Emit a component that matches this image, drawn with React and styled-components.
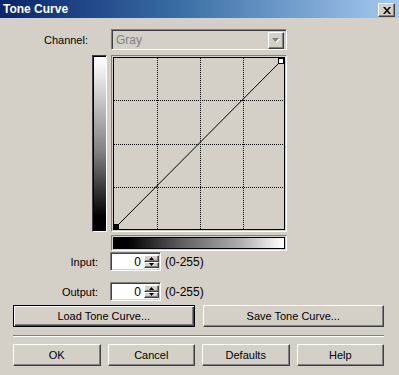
import React from "react";
import styled, { createGlobalStyle, css } from "styled-components";

const Global = createGlobalStyle`
  html, body { margin: 0; padding: 0; background: #d4d0c8; }
  body { font-family: "Liberation Sans", Arial, sans-serif; font-size: 11px; color: #000; }
  * { box-sizing: border-box; }
`;

const raised = css`
  border-top: 1px solid #ffffff;
  border-left: 1px solid #ffffff;
  border-right: 1px solid #404040;
  border-bottom: 1px solid #404040;
  box-shadow: inset -1px -1px 0 #808080, inset 1px 1px 0 #d4d0c8;
`;

const sunken = css`
  border-top: 1px solid #808080;
  border-left: 1px solid #808080;
  border-right: 1px solid #ffffff;
  border-bottom: 1px solid #ffffff;
  box-shadow: inset 1px 1px 0 #404040, inset -1px -1px 0 #d4d0c8;
`;

const Window = styled.div`
  width: 399px;
  height: 375px;
  background: #d4d0c8;
  display: flex;
  flex-direction: column;
  overflow: hidden;
`;

const TitleBar = styled.div`
  height: 18px;
  background: linear-gradient(to right, #0a246a 0%, #3a6ea5 45%, #a6caf0 100%);
  display: flex;
  align-items: center;
  justify-content: space-between;
  padding: 0 4px 0 3px;
`;

const Title = styled.span`
  color: #fff;
  font-weight: bold;
  font-size: 12px;
`;

const CloseButton = styled.div`
  width: 17px;
  height: 14px;
  margin-top: 2px;
  background: #d4d0c8;
  ${raised};
  display: flex;
  align-items: center;
  justify-content: center;
`;

const Row = styled.div`
  display: flex;
  align-items: center;
  margin-top: ${(p) => p.$mt || 0}px;
  height: ${(p) => p.$h}px;
`;

const Label = styled.div`
  width: ${(p) => p.$w}px;
  text-align: right;
  margin-right: ${(p) => p.$gap}px;
`;

const Select = styled.div`
  width: 176px;
  height: 21px;
  ${sunken};
  background: #d4d0c8;
  display: flex;
  align-items: center;
  justify-content: space-between;
  padding: 2px 2px 2px 4px;
`;

const SelectText = styled.span`
  color: #808080;
  font-size: 12px;
`;

const ArrowButton = styled.div`
  width: 16px;
  height: 17px;
  margin-top: 1px;
  ${raised};
  background: #d4d0c8;
  display: flex;
  align-items: center;
  justify-content: center;
`;

const GraphRow = styled.div`
  display: flex;
  margin-top: 5px;
  padding-left: 92px;
  gap: 4px;
`;

const VBar = styled.div`
  width: 15px;
  height: 177px;
  ${sunken};
  border-top-color: #404040;
  border-left-color: #404040;
  box-shadow: inset 1px 1px 0 #000;
  background: linear-gradient(to bottom, #ffffff 0%, #f0f0f0 8%, #808080 55%, #000000 92%, #000000 100%);
`;

const CurveBox = styled.div`
  width: 176px;
  height: 177px;
  border-top: 1px solid #808080;
  border-left: 1px solid #808080;
  border-right: 1px solid #ffffff;
  border-bottom: 1px solid #ffffff;
  background: #d4d0c8;
  padding: 1px;
  display: flex;
`;

const CurveInner = styled.div`
  flex: 1;
  border: 1px solid #000;
  display: flex;
`;

const HBar = styled.div`
  margin-left: 111px;
  margin-top: 3px;
  width: 176px;
  height: 16px;
  border-top: 1px solid #808080;
  border-left: 1px solid #808080;
  border-right: 1px solid #ffffff;
  border-bottom: 1px solid #ffffff;
  padding: 1px;
  display: flex;
`;

const HBarFill = styled.div`
  flex: 1;
  border: 1px solid #000;
  background: linear-gradient(to right, #000000 0%, #000000 8%, #606060 40%, #b0b0b0 75%, #ffffff 100%);
`;

const SpinBox = styled.div`
  width: 51px;
  height: 19px;
  ${sunken};
  background: #fff;
  display: flex;
  padding: 2px 1px 2px 2px;
`;

const SpinValue = styled.div`
  flex: 1;
  text-align: right;
  padding-right: 3px;
  font-size: 12px;
  line-height: 15px;
`;

const SpinButtons = styled.div`
  width: 15px;
  display: flex;
  flex-direction: column;
`;

const SpinBtn = styled.div`
  flex: 1;
  ${raised};
  background: #d4d0c8;
  display: flex;
  align-items: center;
  justify-content: center;
`;

const Range = styled.span`
  margin-left: 4px;
  font-size: 12px;
`;

const ButtonRow = styled.div`
  display: flex;
  gap: ${(p) => p.$gap}px;
  padding: 0 15px 0 13px;
  margin-top: ${(p) => p.$mt}px;
`;

const Button = styled.div`
  flex: 1;
  height: 22px;
  background: #d4d0c8;
  display: flex;
  align-items: center;
  justify-content: center;
  font-size: 11px;
  ${(p) =>
    p.$default
      ? css`
          border: 1px solid #000;
          box-shadow: inset 1px 1px 0 #ffffff, inset -1px -1px 0 #404040, inset -2px -2px 0 #808080;
        `
      : raised}
`;

const Separator = styled.div`
  margin: 8px 15px 0 13px;
  border-top: 1px solid #808080;
  border-bottom: 1px solid #ffffff;
`;

function CloseIcon() {
  return (
    <svg width="8" height="7" viewBox="0 0 8 7">
      <path d="M0 0h2l2 2.5L6 0h2L5 3.5 8 7H6L4 4.5 2 7H0l3-3.5z" fill="#000" />
    </svg>
  );
}

function DownArrow({ disabled }) {
  return (
    <svg width="8" height="5" viewBox="0 0 8 5">
      {disabled && <path d="M1 1h7L4.5 5z" fill="#fff" />}
      <path d="M0 0h7L3.5 4z" fill={disabled ? "#808080" : "#000"} />
    </svg>
  );
}

function SmallArrow({ up }) {
  return (
    <svg width="5" height="3" viewBox="0 0 5 3">
      <path d={up ? "M2.5 0L5 3H0z" : "M0 0h5L2.5 3z"} fill="#000" />
    </svg>
  );
}

function CurveGraph() {
  const w = 170;
  const h = 171;
  const xs = [43, 86, 129];
  const ys = [42, 86, 129];
  return (
    <svg width={w} height={h} viewBox={`0 0 ${w} ${h}`} shapeRendering="crispEdges">
      {xs.map((x) => (
        <line key={"v" + x} x1={x + 0.5} y1={0} x2={x + 0.5} y2={h} stroke="#000" strokeDasharray="1 1" />
      ))}
      {ys.map((y) => (
        <line key={"h" + y} x1={0} y1={y + 0.5} x2={w} y2={y + 0.5} stroke="#000" strokeDasharray="1 1" />
      ))}
      <line x1={2} y1={h - 2} x2={w - 2} y2={2} stroke="#000" strokeWidth="1" shapeRendering="auto" />
      <rect x={0} y={h - 5} width={5} height={5} fill="#000" />
      <rect x={w - 5.5} y={0.5} width={5} height={5} fill="#fff" stroke="#000" />
    </svg>
  );
}

function Spinner() {
  return (
    <SpinBox>
      <SpinValue>0</SpinValue>
      <SpinButtons>
        <SpinBtn>
          <SmallArrow up />
        </SpinBtn>
        <SpinBtn>
          <SmallArrow />
        </SpinBtn>
      </SpinButtons>
    </SpinBox>
  );
}

export default function App() {
  return (
    <>
      <Global />
      <Window>
        <TitleBar>
          <Title>Tone Curve</Title>
          <CloseButton>
            <CloseIcon />
          </CloseButton>
        </TitleBar>

        <Row $mt={11} $h={21}>
          <Label $w={88} $gap={23}>Channel:</Label>
          <Select>
            <SelectText>Gray</SelectText>
            <ArrowButton>
              <DownArrow disabled />
            </ArrowButton>
          </Select>
        </Row>

        <GraphRow>
          <VBar />
          <CurveBox>
            <CurveInner>
              <CurveGraph />
            </CurveInner>
          </CurveBox>
        </GraphRow>

        <HBar>
          <HBarFill />
        </HBar>

        <Row $mt={1} $h={19}>
          <Label $w={98} $gap={12}>Input:</Label>
          <Spinner />
          <Range>(0-255)</Range>
        </Row>

        <Row $mt={11} $h={19}>
          <Label $w={98} $gap={12}>Output:</Label>
          <Spinner />
          <Range>(0-255)</Range>
        </Row>

        <ButtonRow $gap={8} $mt={4}>
          <Button $default>Load Tone Curve...</Button>
          <Button>Save Tone Curve...</Button>
        </ButtonRow>

        <Separator />

        <ButtonRow $gap={7} $mt={7}>
          <Button>OK</Button>
          <Button>Cancel</Button>
          <Button>Defaults</Button>
          <Button>Help</Button>
        </ButtonRow>
      </Window>
    </>
  );
}
